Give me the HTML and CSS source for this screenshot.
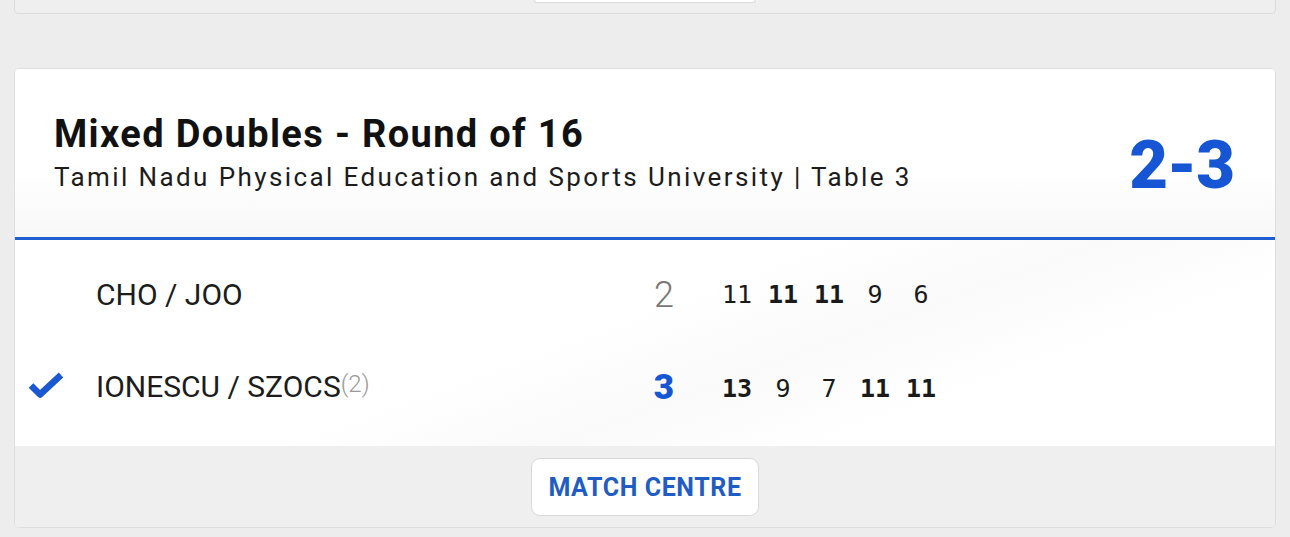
FILE: index.html
```html
<!DOCTYPE html>
<html lang="en">
<head>
<meta charset="utf-8">
<title>Mixed Doubles - Round of 16</title>
<link rel="stylesheet" href="styles.css">
</head>
<body>
<div class="page">
  <div class="prev-card">
    <div class="prev-button"></div>
  </div>

  <section class="card">
    <header class="card-header">
      <div class="titles">
        <h1 class="title">Mixed Doubles - Round of 16</h1>
        <p class="subtitle">Tamil Nadu Physical Education and Sports University | Table 3</p>
      </div>
      <div class="match-score">2-3</div>
    </header>

    <div class="rows">
      <div class="row">
        <div class="win-cell"></div>
        <div class="name">CHO / JOO</div>
        <div class="games">2</div>
        <div class="sets">
          <span class="set">11</span>
          <span class="set won">11</span>
          <span class="set won">11</span>
          <span class="set">9</span>
          <span class="set">6</span>
        </div>
      </div>
      <div class="row">
        <div class="win-cell">
          <svg class="check" width="36" height="27" viewBox="0 0 36 27" aria-hidden="true">
            <path d="M3 13.5 L12 22.5 L33 3" fill="none" stroke="#1a57d0" stroke-width="6.5" stroke-linejoin="round"/>
          </svg>
        </div>
        <div class="name">IONESCU / SZOCS<span class="seed">(2)</span></div>
        <div class="games winner">3</div>
        <div class="sets lower">
          <span class="set won">13</span>
          <span class="set">9</span>
          <span class="set">7</span>
          <span class="set won">11</span>
          <span class="set won">11</span>
        </div>
      </div>
    </div>

    <footer class="card-footer">
      <button class="centre-btn" type="button">MATCH CENTRE</button>
    </footer>
  </section>
</div>
</body>
</html>
```

FILE: styles.css
```css
* { box-sizing: border-box; }

html, body {
  margin: 0;
  padding: 0;
  background: #ededed;
  font-family: Roboto, "Liberation Sans", Arial, sans-serif;
  color: #1a1a1a;
}

.page {
  padding: 0 14px;
  height: 537px;
  overflow: hidden;
}

.prev-card {
  height: 14px;
  background: #efefef;
  border: 1px solid #dcdcdc;
  border-top: none;
  border-radius: 0 0 5px 5px;
  display: flex;
  justify-content: center;
}

.prev-button {
  width: 222px;
  height: 3px;
  background: #fff;
  border: 1px solid #dadada;
  border-top: none;
  border-radius: 0 0 8px 8px;
}

.card {
  margin-top: 54px;
  background: #fff;
  border: 1px solid #dedede;
  border-radius: 5px;
  overflow: hidden;
}

.card-header {
  display: flex;
  justify-content: space-between;
  align-items: flex-start;
  padding: 43px 41px 39px 39px;
  background: linear-gradient(180deg, #ffffff 0%, #ffffff 60%, #f8f8f8 100%);
  border-bottom: 3px solid #1d5fd3;
}

.title {
  margin: 0;
  font-size: 38px;
  line-height: 44px;
  font-weight: 700;
  color: #111;
  letter-spacing: 1.35px;
}

.subtitle {
  margin: 6px 0 0;
  font-size: 26px;
  line-height: 30px;
  font-weight: 400;
  color: #1c1c1c;
  letter-spacing: 2.4px;
}

.match-score {
  margin-top: 20px;
  font-size: 67px;
  line-height: 66px;
  font-weight: 900;
  color: #1656d4;
  letter-spacing: -1px;
}

.rows {
  padding: 9px 0 15px;
  background: linear-gradient(160deg, #ffffff 45%, #fafafa 60%, #ffffff 75%);
}

.row {
  height: 91px;
  display: flex;
  align-items: center;
}

.win-cell {
  width: 81px;
  padding-left: 13px;
  display: flex;
  align-items: center;
}

.check { display: block; }

.name {
  width: 546px;
  font-size: 30px;
  line-height: 36px;
  color: #1c1c1c;
}

.seed {
  font-size: 24px;
  font-weight: 300;
  color: #999;
  vertical-align: 5px;
}

.games {
  width: 44px;
  text-align: center;
  font-size: 36px;
  line-height: 40px;
  font-weight: 300;
  color: #777;
}

.games.winner {
  font-weight: 900;
  font-size: 35px;
  color: #1656d4;
  padding-top: 4px;
}

.sets {
  margin-left: 28px;
  display: flex;
}

.sets.lower { padding-top: 6px; }

.set {
  width: 46px;
  text-align: center;
  font-family: "DejaVu Sans Mono", "Liberation Mono", monospace;
  font-size: 25px;
  line-height: 30px;
  color: #1a1a1a;
}

.set.won { font-weight: 700; }

.card-footer {
  background: #efefef;
  padding: 12px 0 11px;
  display: flex;
  justify-content: center;
}

.centre-btn {
  width: 228px;
  height: 58px;
  background: #fff;
  border: 1px solid #d9d9d9;
  border-radius: 9px;
  font-family: Roboto, "Liberation Sans", Arial, sans-serif;
  font-size: 25px;
  font-weight: 700;
  color: #1f5cc4;
  letter-spacing: 0.6px;
  cursor: pointer;
  padding: 0;
}
```
